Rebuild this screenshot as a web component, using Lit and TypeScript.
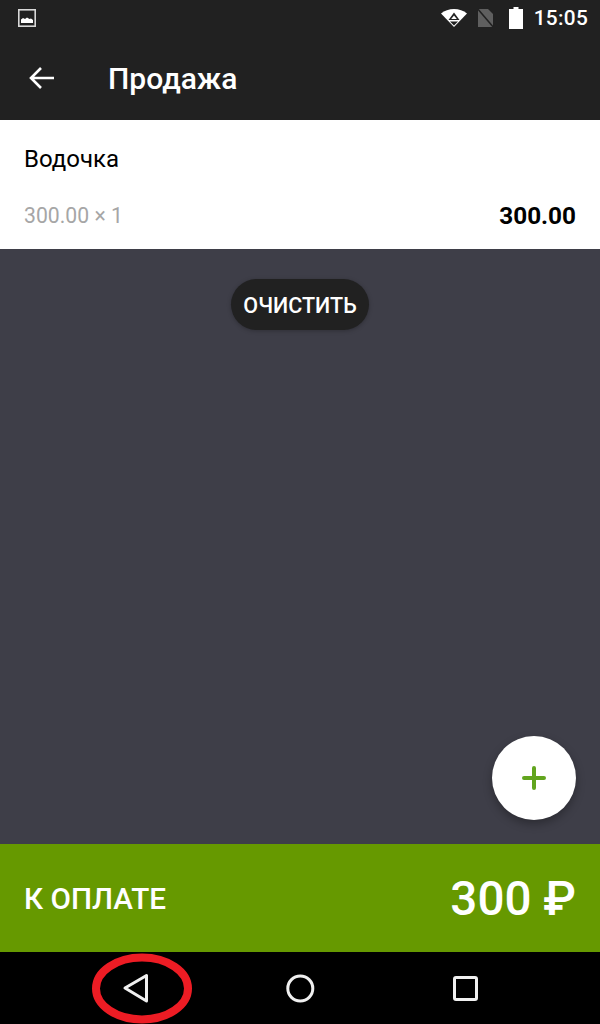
import { LitElement, html, css } from 'lit';
import { customElement } from 'lit/decorators.js';

@customElement('app-root')
export class AppRoot extends LitElement {
  static styles = css`
    :host {
      display: block;
      width: 600px;
      height: 1024px;
      font-family: Roboto, 'Noto Sans', sans-serif;
    }
    .screen {
      position: relative;
      display: flex;
      flex-direction: column;
      width: 600px;
      height: 1024px;
      overflow: hidden;
      background: #3e3e48;
    }
    .status {
      display: flex;
      align-items: center;
      height: 40px;
      padding: 0 12px 4px 17px;
      box-sizing: border-box;
      background: #212121;
      color: #fff;
    }
    .status svg {
      display: block;
    }
    .status .spacer {
      flex: 1;
    }
    .wifi {
      margin-right: 10px;
    }
    .sim {
      margin-right: 15px;
    }
    .battery {
      margin-right: 11px;
    }
    .clock {
      font-size: 20.8px;
      font-weight: 500;
      line-height: 24px;
      letter-spacing: 0.3px;
    }
    .toolbar {
      display: flex;
      align-items: center;
      height: 80px;
      padding: 0 0 2px 28px;
      box-sizing: border-box;
      background: #212121;
      color: #fff;
    }
    .toolbar svg {
      display: block;
      margin: -2px 53px 0 0;
    }
    .title {
      font-size: 30px;
      font-weight: 500;
      line-height: 32px;
    }
    .item {
      height: 129px;
      padding: 24px 24px 0;
      box-sizing: border-box;
      background: #fff;
      color: #000;
    }
    .name {
      font-size: 24px;
      line-height: 30px;
    }
    .row {
      display: flex;
      justify-content: space-between;
      align-items: center;
      margin-top: 27px;
      line-height: 30px;
    }
    .price {
      font-size: 21.2px;
      color: #a6a6a6;
    }
    .sum {
      font-size: 24.3px;
      font-weight: 700;
    }
    .content {
      position: relative;
      flex: 1;
      display: flex;
      flex-direction: column;
      align-items: center;
      padding-top: 30px;
    }
    .clear {
      height: 51px;
      padding: 0 12px;
      border-radius: 26px;
      background: #212121;
      color: #fff;
      font-size: 21.5px;
      font-weight: 500;
      line-height: 53px;
      box-shadow: 0 1px 4px rgba(0, 0, 0, 0.25);
    }
    .fab {
      position: absolute;
      right: 24px;
      bottom: 24px;
      display: flex;
      align-items: center;
      justify-content: center;
      width: 84px;
      height: 84px;
      border-radius: 50%;
      background: #fff;
      box-shadow: 0 4px 10px rgba(0, 0, 0, 0.3);
    }
    .pay {
      display: flex;
      justify-content: space-between;
      align-items: center;
      height: 108px;
      padding: 2px 24px 0;
      box-sizing: border-box;
      background: #669900;
      color: #fff;
    }
    .pay-label {
      margin-top: -2px;
      font-size: 29.7px;
      font-weight: 500;
    }
    .pay-total {
      font-size: 47.6px;
      font-weight: 500;
    }
    .nav {
      position: relative;
      height: 72px;
      background: #000;
    }
    .nav svg {
      position: absolute;
      left: 0;
      bottom: 0;
    }
  `;

  render() {
    return html`
      <div class="screen">
        <div class="status">
          <svg width="20" height="20" viewBox="0 0 20 20">
            <rect x="1.800" y="1.800" width="16.400" height="16.400" fill="none" stroke="#d8d8d8" stroke-width="1.600" />
            <path d="M4 15v-3.500l2-1.500 2 1 2-1.500 2.500 1.500 1.500-.5 2 1.500V15z" fill="#fff" />
          </svg>
          <span class="spacer"></span>
          <svg class="wifi" width="26" height="18" viewBox="0 0 26 18">
            <path d="M0 4.500C3.500 1.700 8 0 13 0s9.500 1.700 13 4.500L13 18z" fill="#fff" />
            <path d="M13 3.500l5.500 7.500h-11z" fill="#212121" />
            <path d="M13 6.500l2.800 3.500h-5.600z" fill="#fff" />
            <path d="M9 12.500h8L13 16.500z" fill="#212121" />
          </svg>
          <svg class="sim" width="17" height="20" viewBox="0 0 17 20">
            <path d="M1 1h10l5 5v13H1z" fill="#5f5f5f" />
            <path d="M0 0l17 20" stroke="#212121" stroke-width="1.500" />
          </svg>
          <svg class="battery" width="14" height="22" viewBox="0 0 14 22">
            <path d="M4.500 0h5v2H14v20H0V2h4.500z" fill="#fff" />
          </svg>
          <span class="clock">15:05</span>
        </div>
        <div class="toolbar">
          <svg width="27" height="24" viewBox="0 0 27 24">
            <path d="M26 12H4M13 2L3 12l10 10" fill="none" stroke="#fff" stroke-width="2.600" />
          </svg>
          <span class="title">Продажа</span>
        </div>
        <div class="item">
          <div class="name">Водочка</div>
          <div class="row">
            <span class="price">300.00 × 1</span>
            <span class="sum">300.00</span>
          </div>
        </div>
        <div class="content">
          <div class="clear">ОЧИСТИТЬ</div>
          <div class="fab">
            <svg width="24" height="24" viewBox="0 0 24 24">
              <path d="M12 2v20M2 12h20" stroke="#62a51e" stroke-width="4" stroke-linecap="round" />
            </svg>
          </div>
        </div>
        <div class="pay">
          <span class="pay-label">К ОПЛАТЕ</span>
          <span class="pay-total">300 ₽</span>
        </div>
        <div class="nav">
          <svg width="600" height="72" viewBox="0 0 600 72" fill="none" stroke="#f0f0f0" stroke-width="3">
            <path d="M146.500 23.500v25.500L125 36z" stroke-linejoin="round" />
            <circle cx="300.300" cy="36.500" r="12.500" />
            <rect x="454.500" y="25.500" width="22" height="22" rx="1.500" />
            <ellipse cx="142" cy="36.500" rx="46" ry="31" stroke="#ed1c24" stroke-width="8" />
          </svg>
        </div>
      </div>
    `;
  }
}
